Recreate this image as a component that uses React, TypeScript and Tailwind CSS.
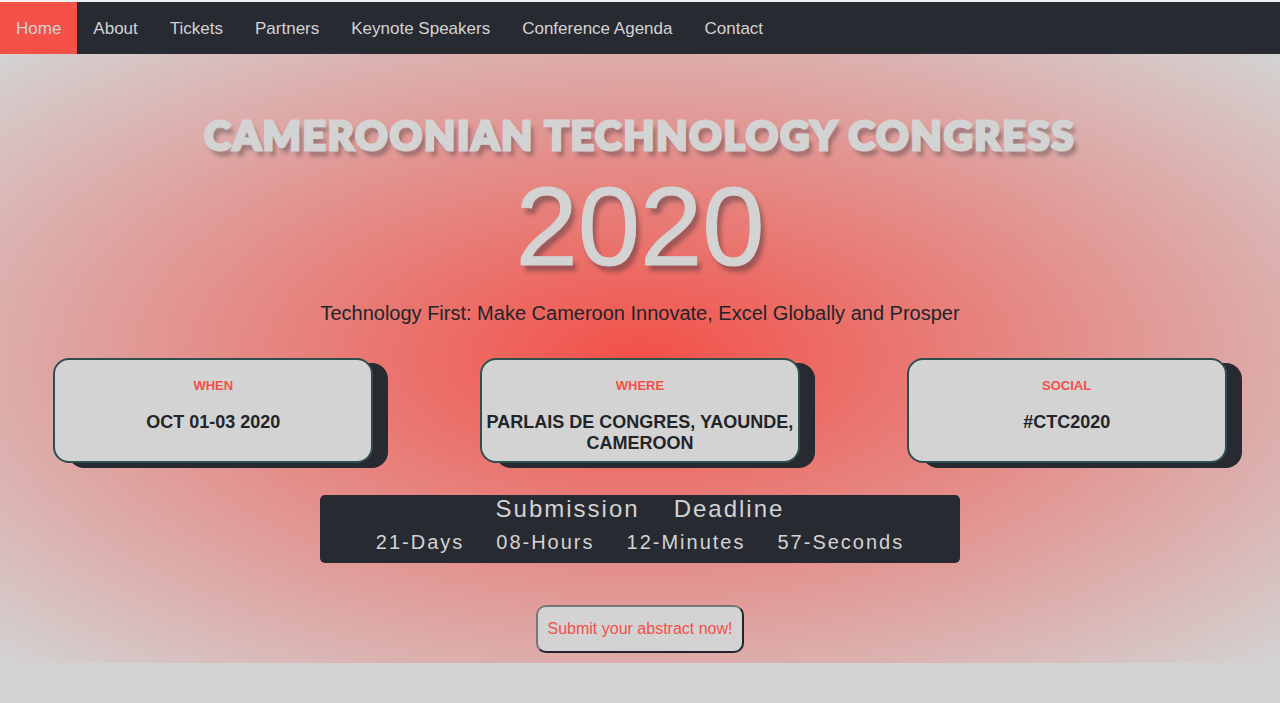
const links = [
  "Home",
  "About",
  "Tickets",
  "Partners",
  "Keynote Speakers",
  "Conference Agenda",
  "Contact",
];

const facts = [
  { label: "WHEN", value: "OCT 01-03 2020" },
  { label: "WHERE", value: "PARLAIS DE CONGRES, YAOUNDE, CAMEROON" },
  { label: "SOCIAL", value: "#CTC2020" },
];

const countdown = ["21-Days", "08-Hours", "12-Minutes", "57-Seconds"];

function NavBar() {
  return (
    <nav className="flex flex-wrap border-t-2 border-[#eef0f2] bg-[#282a32]">
      {links.map((link, i) => (
        <a
          key={link}
          href="#"
          className={
            i === 0
              ? "bg-[#f35048] px-4 pt-[15px] pb-[13px] text-[17px] leading-6 text-[#d3d3d3]"
              : "px-4 pt-[15px] pb-[13px] text-[17px] leading-6 text-[#d3d3d3]"
          }
        >
          {link}
        </a>
      ))}
    </nav>
  );
}

function FactCard({ label, value }: { label: string; value: string }) {
  return (
    <article className="w-3/4 rounded-2xl border-2 border-[#2f4f4f] bg-[#d3d3d3] pt-[18px] pb-[7px] text-center font-bold shadow-[15px_5px_0_0_#282a32]">
      <h2 className="mb-[18px] text-[13px] leading-4 text-[#f35048]">{label}</h2>
      <p className="text-lg leading-[21px]">{value}</p>
    </article>
  );
}

export default function App() {
  return (
    <div className="min-h-screen bg-[#d3d3d3] font-['Liberation_Sans',Arial,sans-serif] text-[#212529]">
      <NavBar />
      <main className="flex flex-col items-center bg-[radial-gradient(#f35048,#d3d3d3)] pt-14 pb-2.5">
        <h1 className="text-center text-[#d3d3d3] [text-shadow:4px_6px_4px_rgba(40,42,50,0.4)]">
          <span className="block font-['Lato',sans-serif] text-[40px] leading-[50px] font-black tracking-[2px] [-webkit-text-stroke:3px_#d3d3d3]">
            CAMEROONIAN TECHNOLOGY CONGRESS
          </span>
          <span className="block text-[112px] leading-[134px] [-webkit-text-stroke:1px_#d3d3d3]">2020</span>
        </h1>
        <p className="mt-1 text-center text-xl leading-[30px]">
          Technology First: Make Cameroon Innovate, Excel Globally and Prosper
        </p>
        <section className="mt-[30px] grid w-full grid-cols-3">
          {facts.map((fact) => (
            <div key={fact.label} className="flex justify-center">
              <FactCard {...fact} />
            </div>
          ))}
        </section>
        <section className="mt-8 w-1/2 rounded-[5px] bg-[#282a32] pb-1.5 tracking-[2px] text-[#d3d3d3]">
          <h2 className="flex justify-center gap-[34px] text-2xl leading-7">
            <span>Submission</span>
            <span>Deadline</span>
          </h2>
          <p className="mt-1 flex justify-center gap-8 text-xl leading-[30px]">
            {countdown.map((part) => (
              <span key={part}>{part}</span>
            ))}
          </p>
        </section>
        <button
          type="button"
          className="mt-[42px] rounded-[10px] border-2 border-t-[#767676] border-r-[#212529] border-b-[#212529] border-l-[#767676] bg-[#d3d3d3] px-2.5 py-2.5 text-base leading-6 text-[#f35048]"
        >
          Submit your abstract now!
        </button>
      </main>
    </div>
  );
}
